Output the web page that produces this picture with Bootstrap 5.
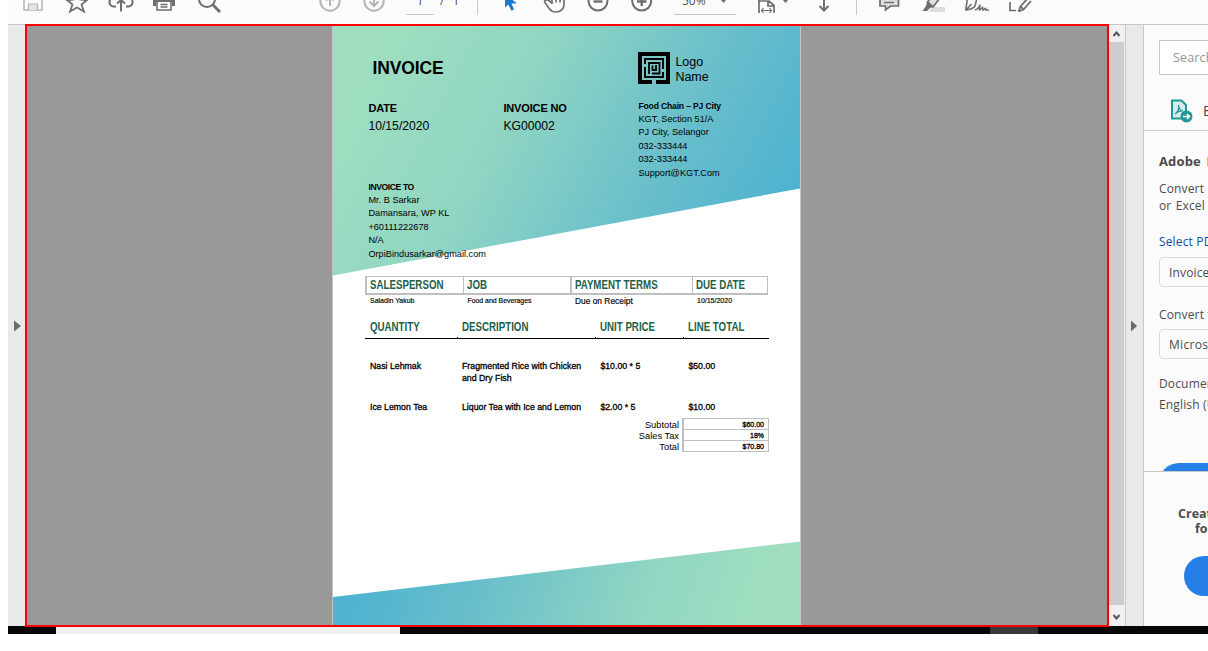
<!DOCTYPE html>
<html lang="en">
<head>
<meta charset="utf-8">
<meta name="viewport" content="width=device-width, initial-scale=1">
<title>Invoice</title>
<link rel="stylesheet" href="https://cdn.jsdelivr.net/npm/bootstrap@5.3.0/dist/css/bootstrap.min.css">
<style>
body{background:#fff;font-family:"Open Sans","Noto Sans",sans-serif;font-size:12px;color:#4b4b4b;overflow:hidden;height:651px}
.viewer{margin-left:8px;height:634px;overflow:hidden}
.tools{height:24px;background:#fbfbfb;color:#6e6e6e}
.tools svg{width:44px;height:24px;flex:none;fill:none;stroke:currentColor;stroke-width:2}
.tools .off{color:#b4b4b4}
.tools .field{height:15px;border-bottom:1px solid #c6c6c6;line-height:16px;margin-top:0}
.tools .field span,.tools .pages{display:block;line-height:16px;margin-top:-7px;color:#5b4a5c}
.tools .rule{width:1px;height:15px;background:#c9c9c9}
.workspace{height:602px}
.edge{background:#e9e9e9;border-top:1px solid #c8c8c8}
.edge-left{width:17px}
.edge-right{width:19px;border-left:1px solid #c8c8c8;border-right:1px solid #c8c8c8}
.doc{width:1084px;height:603px;border:2px solid red;background:#999;z-index:2}
.scroller{width:16px;background:#f0f0f0;border-top:1px solid #c8c8c8}
.thumb{width:15px;height:563px;background:#cdcdcd}
.sheet{width:469px;margin-left:305px;height:599px;border:solid #c5c5c5;border-width:0 1px;background:#fff;color:#000;font-family:"Liberation Sans",Arial,sans-serif}
.sheet .art{position:absolute;inset:0;width:467px;height:599px}
.sheet .content{position:relative}
.head{height:250px;padding-left:35.4px;grid-template-columns:135px 135px 1fr}
.h-main{font-size:17.5px;line-height:20px;font-weight:700;letter-spacing:-.1px;margin:32px 0 0 4px}
.h-sub{font-size:11px;line-height:14px;font-weight:700;letter-spacing:-.15px}
.val{font-size:12.2px;line-height:16px;margin-top:3px}
.h-mini{font-size:8.6px;line-height:13px;font-weight:700}
.addr{font-size:9.2px;line-height:13.5px}
.lines{padding-left:32px}
.narrow{font-weight:700;color:#1d6047;font-size:12px}
.narrow span{display:inline-block;transform:scaleX(.81);transform-origin:0 50%;white-space:nowrap}
.g1{display:grid;width:403px;grid-template-columns:97.5px 107.5px 122px 76px}
.g1.boxed{height:19px;border:solid #bfbfbf;border-width:1px 1px 2px 2px;grid-template-columns:96px 107px 122px 1fr}
.boxed>div{line-height:17px;padding-left:3px;min-width:0}
.boxed>div+div{border-left:1px solid #bfbfbf}
.boxed>div.wide{border-left-width:2px}
.terms{height:12px;line-height:12px;font-size:7px;-webkit-text-stroke:.2px #222}
.terms>div{padding-left:5px}
.g2{display:grid;width:404px;grid-template-columns:92px 138.4px 88px 1fr}
.g2>div{padding-left:5px}
.cols{height:32px;padding-top:13px;line-height:14px;border-bottom:1px solid #000}
.cols>div{position:relative}
.cols>div+div::before{content:"";position:absolute;left:0;bottom:0;width:1px;height:1px;background:#000}
.item{font-size:8.75px;line-height:12px;-webkit-text-stroke:.3px #000}
.totals{width:404px;margin-top:5px;font-size:9.3px;display:grid;grid-template-columns:1fr 87px;text-align:right;line-height:11px}
.totals>.lab{padding:2px 3px 0 0}
.totals .sum{border:1px solid #bfbfbf;border-left-width:2px;height:34px}
.sum div{height:11px;border-bottom:1px solid #bfbfbf;line-height:11px;font-size:7px;padding-right:4px;-webkit-text-stroke:.3px #000}
.panel{width:64px;background:#fbfbfb;border-top:1px solid #c8c8c8;white-space:nowrap}
.panel .inset{padding-left:15px;letter-spacing:.15px}
.searchbox{height:35px;width:200px;margin-top:15px;border:1px solid #c6c6c6;background:#fff;color:#959595;font-size:12.5px;line-height:34px;padding-left:13px}
.tool-head{height:56px;border-bottom:1px solid #cfcfcf;padding:13px 0 0 25px}
.pick{height:30px;width:200px;border:1px solid #dadada;border-radius:4px;line-height:29px;padding-left:9px}
.ln{line-height:17px}
.blue{background:#267fe6}
.tasks{height:8px;background:#060606}
</style>
</head>
<body>
<div class="viewer">
  <div class="tools d-flex align-items-start overflow-hidden">
    <svg class="off" style="margin-left:3px" viewBox="0 0 44 24"><path d="M13-7H31V10H13Z" stroke-width="1.5"/><path d="M17.500 10V4H26.500V10" fill="#e4e4e4" stroke-width="1.200"/></svg>
    <svg viewBox="0 0 44 24"><path d="M22-7L25-.5 31.500 .5 26.500 4.500 29 11.500 22 7.500 15 11.500 17.500 4.500 12.500 .5 19-.5Z" stroke-width="1.700"/></svg>
    <svg viewBox="0 0 44 24"><path d="M22 11.500V0M18 3.500L22 0 26 3.500M17 6.500H15.500A4 4 0 0 1 14-2M27 6.500H28.500A4 4 0 0 0 30-2" stroke-width="2"/></svg>
    <svg viewBox="0 0 44 24"><path d="M10-3H32V6H29V2H13V6H10Z" fill="currentColor" stroke="none"/><path d="M14 2V10H28V2M17.500 4.500H24.500M17.500 7H24.500" stroke-width="1.600"/></svg>
    <svg viewBox="0 0 44 24"><circle cx="20" cy="-1" r="8"/><path d="M25.500 4.500L33 12" stroke-width="2.800"/></svg>
    <svg class="off" style="margin-left:77px" viewBox="0 0 44 24"><circle cx="22" cy="1" r="9.700"/><path d="M22 6V-4M18 .5L22-3.500 26 .5"/></svg>
    <svg class="off" viewBox="0 0 44 24"><circle cx="22" cy="1" r="9.700"/><path d="M22-5V5.500M17.500 1.500L22 6 26.500 1.500"/></svg>
    <div class="field text-center" style="width:28px;margin-left:10px"><span>1</span></div>
    <div class="pages" style="margin-left:6px;width:37px;word-spacing:5px">/ 1</div>
    <div class="rule"></div>
    <svg style="margin-left:11px" viewBox="0 0 44 24"><path d="M16-6V7.500L19.300 4.500 22.500 10.800 25 9.500 22.500 3.500H28Z" fill="#1e76d0" stroke="none"/></svg>
    <svg viewBox="0 0 44 24"><path d="M19 4V-4M19 3L15.500 .3C13-1 10.500 1 12 2.500L16.500 9C18.500 11.500 20 12 22.500 12 28 12 31 9 31 4V-1M23 2.500V-5M27 2.500V-4" stroke-width="1.700"/></svg>
    <svg viewBox="0 0 44 24"><circle cx="21" cy="1" r="9.500"/><path d="M16.500 1.500H25.500" stroke-width="2.400"/></svg>
    <svg viewBox="0 0 44 24"><circle cx="20.700" cy="1" r="9.500"/><path d="M16 1.500H25.500M20.700-4V6" stroke-width="2.400"/></svg>
    <div class="field d-flex" style="width:62px;margin-left:9px;padding-left:8px"><span>50%</span><svg viewBox="0 0 44 24" style="margin-left:2px"><path d="M12-1H19L15.500 3Z" fill="currentColor" stroke="none"/></svg></div>
    <svg style="margin-left:8px;width:52px" viewBox="0 0 52 24"><path d="M15-6V13M14 1H25L30 5.500V13M24 1V6H30" stroke-width="1.700"/><path d="M18 10.500H27M19.500 8L17.500 10.500 19.500 13M25.500 8L27.500 10.500 25.500 13" stroke-width="1.200"/><path d="M38-1H45L41.500 3Z" fill="currentColor" stroke="none"/></svg>
    <svg style="margin-left:6px" viewBox="0 0 44 24"><path d="M22-4V10M17.500 6L22 10.500 26.500 6"/></svg>
    <div class="rule" style="margin-left:10px"></div>
    <svg style="margin-left:10px" viewBox="0 0 44 24"><path d="M13-6V6H18.500V10L23.500 6H31.500V-6" fill="#dedede" stroke-width="1.700"/><path d="M17 2.500H27" stroke-width="1.400"/></svg>
    <svg viewBox="0 0 44 24"><path d="M22 7H34V12H17Z" fill="#ddd" stroke="none"/><path d="M16.500 2L24-8H32L29-2 22 7Z" fill="#dedede" stroke-width="1.700"/><path d="M11.500 11L15 6 16 1.500 22.500 6.500 18.500 8.500 16 11Z" fill="currentColor" stroke="none"/></svg>
    <svg viewBox="0 0 44 24"><path d="M12-3C13 2 10.500 6 11 10 14 9.500 18 9 20 6L22-2M11 10L16.500 4M20 10C23 9 25 6 25 4.500 25 7 24 9 24.500 10L27.500 7.500 28 10 30.500 8.500 31 10H34" stroke-width="1.600"/></svg>
    <svg viewBox="0 0 44 24"><path d="M11 2V10.500H17" stroke-width="1.700"/><path d="M19.500 11.500L21.500 6.500 29-2M19.500 11.500L24.500 9.500 32 1M21.500 6.500L24.500 9.500" stroke-width="1.800"/></svg>
  </div>

  <div class="workspace d-flex">
    <div class="edge edge-left d-flex align-items-center justify-content-end flex-shrink-0"><svg width="11" height="12"><path d="M0 .5V11.500L7 6Z" fill="#6b6b6b"/></svg></div>
    <div class="doc position-relative flex-shrink-0">
      <div class="sheet position-relative">
        <svg class="art" viewBox="0 0 467 599" preserveAspectRatio="none">
          <defs>
            <linearGradient id="top" gradientUnits="userSpaceOnUse" x1="40" y1="20" x2="420" y2="222"><stop offset="0" stop-color="#9fdfc0"/><stop offset=".35" stop-color="#90d5c3"/><stop offset=".75" stop-color="#66bdcb"/><stop offset="1" stop-color="#50b3d0"/></linearGradient>
            <linearGradient id="foot" gradientUnits="userSpaceOnUse" x1="30" y1="560" x2="390" y2="680"><stop offset="0" stop-color="#50b3d0"/><stop offset=".3" stop-color="#69bfca"/><stop offset=".7" stop-color="#90d5c3"/><stop offset="1" stop-color="#9fdfc0"/></linearGradient>
          </defs>
          <path d="M0 0H467V162.500L0 249.500Z" fill="url(#top)"/>
          <path d="M0 571L467 515.500V599H0Z" fill="url(#foot)"/>
        </svg>
        <div class="content">
          <div class="head d-grid">
            <div>
              <div class="h-main">INVOICE</div>
              <div class="h-sub" style="margin-top:23px">DATE</div>
              <div class="val">10/15/2020</div>
              <div class="h-mini" style="margin-top:46.500px;letter-spacing:-.4px">INVOICE TO</div>
              <div class="addr">Mr. B Sarkar<br>Damansara, WP KL<br>+60111222678<br>N/A<br><span class="text-nowrap">OrpiBindusarkar@gmail.com</span></div>
            </div>
            <div>
              <div class="h-sub" style="margin-top:75px">INVOICE NO</div>
              <div class="val">KG00002</div>
            </div>
            <div>
              <div class="d-flex" style="margin-top:26px;height:47.500px">
                <svg width="32" height="32" viewBox="0 0 32 32" fill="none" stroke="#000"><path d="M14 30H2V2H30V30H18" stroke-width="4"/><path d="M7 12V7H25V17M7 15V25H25V20" stroke-width="2"/><path d="M11 22V11H21.500V21.500H14" stroke-width="1.800"/><path d="M14.500 13.500V18H18V13" stroke-width="1.800"/></svg>
                <div style="font-size:12.500px;line-height:15px;padding:2.500px 0 0 5px">Logo<br>Name</div>
              </div>
              <div class="h-mini" style="letter-spacing:-.17px">Food Chain – PJ City</div>
              <div class="addr">KGT, Section 51/A<br>PJ City, Selangor<br>032-333444<br>032-333444<br>Support@KGT.Com</div>
            </div>
          </div>
          <div class="lines">
            <div class="g1 boxed narrow"><div><span>SALESPERSON</span></div><div><span>JOB</span></div><div class="wide"><span>PAYMENT TERMS</span></div><div><span>DUE DATE</span></div></div>
            <div class="g1 terms"><div>Saladin Yakub</div><div style="font-size:6.900px">Food and Beverages</div><div style="font-size:8.400px">Due on Receipt</div><div>10/15/2020</div></div>
            <div class="g2 cols narrow"><div><span>QUANTITY</span></div><div><span>DESCRIPTION</span></div><div><span>UNIT PRICE</span></div><div><span>LINE TOTAL</span></div></div>
            <div class="g2 item" style="margin-top:21px"><div>Nasi Lehmak</div><div>Fragmented Rice with Chicken<br>and Dry Fish</div><div>$10.00 * 5</div><div>$50.00</div></div>
            <div class="g2 item" style="margin-top:17px"><div>Ice Lemon Tea</div><div>Liquor Tea with Ice and Lemon</div><div>$2.00 * 5</div><div>$10.00</div></div>
            <div class="totals"><div class="lab">Subtotal<br>Sales Tax<br>Total</div><div class="sum"><div>$60.00</div><div>18%</div><div class="border-0">$70.80</div></div></div>
          </div>
        </div>
      </div>
    </div>
    <div class="scroller flex-shrink-0">
      <div class="d-flex justify-content-center" style="height:17px;width:15px"><svg width="15" height="17"><path d="M4.500 11L7.500 7.500 10.500 11" fill="none" stroke="#555" stroke-width="2"/></svg></div>
      <div class="thumb"></div>
      <svg class="d-block" width="15" height="20"><path d="M4.500 10L7.500 13.500 10.500 10" fill="none" stroke="#555" stroke-width="2"/></svg>
    </div>
    <div class="edge edge-right d-flex align-items-center flex-shrink-0"><svg width="17" height="12"><path d="M5 .5V11.500L11 6Z" fill="#6b6b6b"/></svg></div>
    <div class="panel overflow-hidden flex-shrink-0">
      <div class="inset"><div class="searchbox">Search</div></div>
      <div class="tool-head d-flex align-items-center" style="padding-top:16px">
        <svg width="24" height="24" class="flex-shrink-0" viewBox="0 0 24 24"><path d="M3 1.500H12.500L17 6V19.500H3Z" fill="#d5eceb" stroke="#1f9794" stroke-width="2"/><path d="M6 15C9 13 10 9 9.500 6 10 10 12 12 14 12 11 11.500 8 13 6 15" fill="none" stroke="#1f9794" stroke-width="1.200"/><circle cx="17.500" cy="17.500" r="6" fill="#1f9794"/><path d="M14 17.500H20M18 15L20.500 17.500 18 20" fill="none" stroke="#fff" stroke-width="1.500"/></svg>
        <span style="font-size:14px;margin-left:10px">Export PDF</span>
      </div>
      <div class="inset overflow-hidden" style="height:340px">
        <div class="ln fw-bold" style="font-size:13px;margin-top:22px;word-spacing:2px">Adobe Export PDF</div>
        <div class="ln" style="margin-top:10px;word-spacing:1px">Convert PDF Files to Word<br>or Excel Online</div>
        <div class="ln" style="margin-top:19px;color:#0d4f9c">Select PDF File</div>
        <div class="pick" style="margin-top:7px">Invoice.pdf</div>
        <div class="ln" style="margin-top:19px">Convert to</div>
        <div class="pick" style="margin-top:6px;line-height:30px;letter-spacing:.3px">Microsoft Word</div>
        <div class="ln" style="margin-top:16px">Document Language:</div>
        <div class="ln" style="margin-top:4px">English (U.S.)</div>
        <div class="blue rounded-pill" style="height:40px;width:200px;margin-top:50px"></div>
      </div>
      <div class="border-top fw-bold" style="border-color:#c8c8c8!important;padding:34px 0 0 34px;line-height:15px;font-size:12.500px">
        <div>Create, edit and sign</div><div style="padding-left:17px">forms &amp; agreements</div>
        <div class="blue rounded-pill" style="height:40px;width:160px;margin:20px 0 0 6px"></div>
      </div>
    </div>
  </div>
  <div class="tasks d-flex"><div style="width:344px;margin-left:48px;background:#f1f1f1"></div><div style="width:48px;margin-left:590px;background:#393939"></div></div>
</div>
<script src="https://cdn.jsdelivr.net/npm/bootstrap@5.3.0/dist/js/bootstrap.bundle.min.js"></script>
</body>
</html>
